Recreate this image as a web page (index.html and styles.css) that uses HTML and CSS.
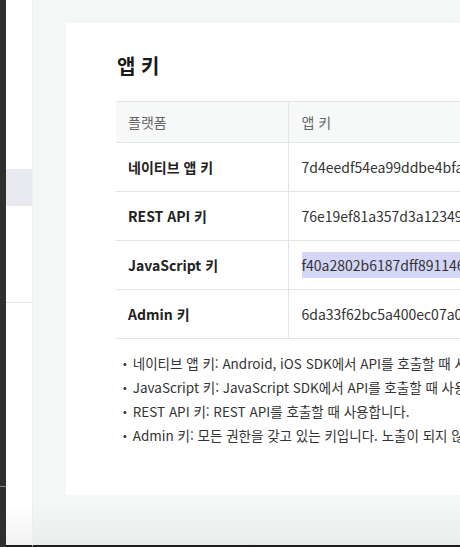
FILE: index.html
```html
<!DOCTYPE html>
<html lang="ko">
<head>
<meta charset="utf-8">
<link rel="stylesheet" href="styles.css">
</head>
<body>
<div class="frame">
  <div class="strip"><div class="strip-line"></div></div>
  <aside class="sidebar">
    <div class="side-gap"></div>
    <div class="side-active"></div>
    <div class="side-rule"></div>
  </aside>
  <main class="main">
    <section class="card">
      <h2 class="title">앱 키</h2>
      <table class="keys">
        <thead>
          <tr><th class="c1">플랫폼</th><th>앱 키</th></tr>
        </thead>
        <tbody>
          <tr><td class="c1">네이티브 앱 키</td><td>7d4eedf54ea99ddbe4bfa2c1e8a7f03d</td></tr>
          <tr><td class="c1">REST API 키</td><td>76e19ef81a357d3a12349b0c6f2d8e41</td></tr>
          <tr><td class="c1">JavaScript 키</td><td><span class="sel">f40a2802b6187dff8911469a3c2e5d07</span></td></tr>
          <tr><td class="c1">Admin 키</td><td>6da33f62bc5a400ec07a07e1b94c8d25</td></tr>
        </tbody>
      </table>
      <ul class="notes">
        <li>네이티브 앱 키: Android, iOS SDK에서 API를 호출할 때 사용합니다.</li>
        <li>JavaScript 키: JavaScript SDK에서 API를 호출할 때 사용합니다.</li>
        <li>REST API 키: REST API를 호출할 때 사용합니다.</li>
        <li>Admin 키: 모든 권한을 갖고 있는 키입니다. 노출이 되지 않도록 주의가 필요합니다.</li>
      </ul>
    </section>
  </main>
</div>
</body>
</html>
```

FILE: styles.css
```css
html, body {
  margin: 0;
  padding: 0;
  width: 460px;
  height: 547px;
  overflow: hidden;
  background: #f5f6f6;
}

.frame {
  display: flex;
  width: 460px;
  height: 547px;
  font-family: "Noto Sans CJK KR", "Noto Sans", sans-serif;
  color: #222;
}

.strip {
  width: 6px;
  flex: none;
  background: #2f2f2f;
  display: flex;
  flex-direction: column;
  justify-content: flex-end;
}

.strip-line {
  height: 1px;
  background: #8a8a8a;
  margin-bottom: 60px;
}

.sidebar {
  width: 27px;
  flex: none;
  background: linear-gradient(to bottom, #ffffff 0, #ffffff 505px, #f2f2f2 545px);
  border-right: 1px solid #eceeee;
  border-bottom: 2px solid #1e1e1e;
  box-sizing: border-box;
  display: flex;
  flex-direction: column;
}

.side-gap {
  height: 169px;
}

.side-active {
  height: 37px;
  background: #e9eaf0;
}

.side-rule {
  margin-top: 96px;
  height: 1px;
  background: #e2e2e2;
}

.main {
  flex: 1;
  min-width: 0;
  overflow: hidden;
  padding: 23px 0 0 33px;
  box-sizing: border-box;
  background: linear-gradient(to bottom, #f5f6f6 0, #f5f6f6 505px, #eaebeb 545px);
  border-bottom: 2px solid #1e1e1e;
}

.card {
  width: 620px;
  height: 472px;
  box-sizing: border-box;
  background: #fff;
  padding: 29px 0 0 50px;
}

.title {
  margin: 0 0 21px 1px;
  font-size: 20px;
  line-height: 28px;
  font-weight: 700;
  color: #1a1a1a;
}

.keys {
  width: 540px;
  border-collapse: collapse;
  font-size: 14px;
  table-layout: fixed;
}

.keys th,
.keys td {
  text-align: left;
  padding: 0 13px;
  border-top: 1px solid #e4e5e5;
  border-bottom: 1px solid #e4e5e5;
  white-space: nowrap;
}

.keys th {
  height: 40px;
  background: #f7f8f8;
  font-weight: 400;
  color: #666;
}

.keys td {
  height: 48px;
  color: #333;
}

.keys .c1 {
  width: 172px;
  box-sizing: border-box;
  border-right: 1px solid #e4e5e5;
  padding-left: 12px;
}

.keys td.c1 {
  font-weight: 700;
  color: #222;
}

.sel {
  background: #d3d6f6;
  padding: 3px 0;
}

.notes {
  list-style: none;
  margin: 12px 0 0 0;
  padding: 0 0 0 7px;
  font-size: 13.5px;
  color: #333;
  white-space: nowrap;
}

.notes li {
  display: flex;
  gap: 6px;
  height: 24px;
  line-height: 24px;
  align-items: center;
}

.notes li::before {
  content: "•";
  font-size: 11px;
}
```
